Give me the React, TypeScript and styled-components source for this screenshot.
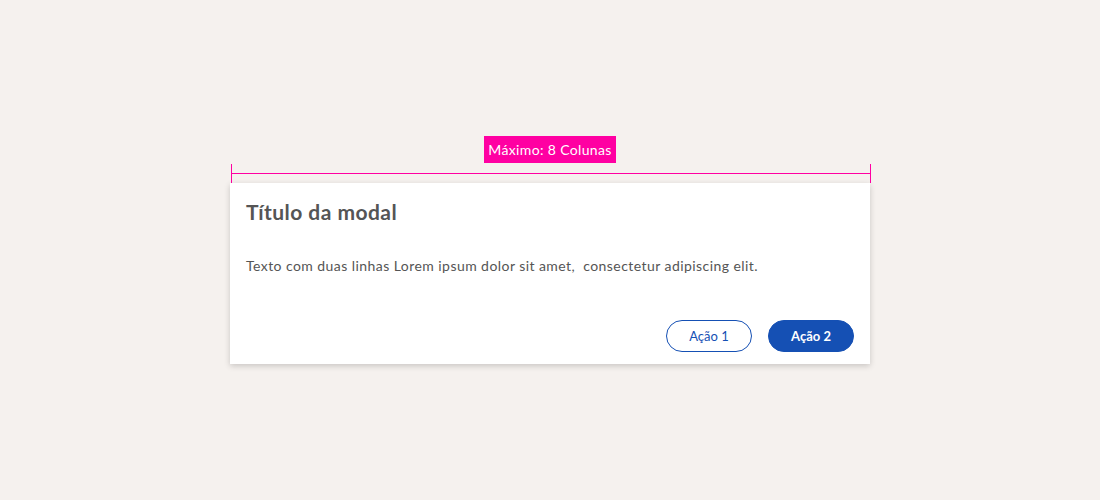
import React from "react";
import styled, { createGlobalStyle } from "styled-components";

const Global = createGlobalStyle`
  html, body { margin: 0; padding: 0; background: #f5f1ee; }
  body { font-family: "Lato", "Open Sans", sans-serif; }
`;

const Page = styled.div`
  width: 1100px;
  height: 500px;
  display: flex;
  flex-direction: column;
  align-items: center;
  padding-top: 136px;
  box-sizing: border-box;
`;

const Column = styled.div`
  width: 640px;
  display: flex;
  flex-direction: column;
  align-items: center;
`;

const Label = styled.div`
  background: #ff00a2;
  color: #fff;
  font-size: 14px;
  letter-spacing: 0.35px;
  height: 27px;
  line-height: 27px;
  padding: 0 4px;
`;

const Ruler = styled.div`
  align-self: flex-start;
  width: 640px;
  height: 19px;
  margin-top: 1px;
  margin-left: 1px;
  border-left: 1px solid #ff00a2;
  border-right: 1px solid #ff00a2;
  display: flex;
  flex-direction: column;
  padding-top: 9px;
  box-sizing: border-box;
`;

const RulerLine = styled.div`
  height: 1px;
  background: #ff00a2;
`;

const Modal = styled.div`
  width: 640px;
  background: #fff;
  box-shadow: 0 2px 6px rgba(0, 0, 0, 0.18);
  padding: 17px 16px 12px 16px;
  box-sizing: border-box;
  display: flex;
  flex-direction: column;
`;

const Title = styled.h2`
  margin: 0;
  font-size: 21px;
  font-weight: 700;
  letter-spacing: 0.45px;
  color: #555;
  line-height: 24px;
`;

const Body = styled.p`
  margin: 33px 0 0 0;
  font-size: 14px;
  letter-spacing: 0.44px;
  color: #555;
  line-height: 18px;
`;

const Actions = styled.div`
  display: flex;
  justify-content: flex-end;
  gap: 16px;
  margin-top: 45px;
`;

const Button = styled.button<{ $primary?: boolean }>`
  width: 86px;
  height: 32px;
  border-radius: 16px;
  border: 1px solid #1550b4;
  background: ${(p) => (p.$primary ? "#1550b4" : "#fff")};
  color: ${(p) => (p.$primary ? "#fff" : "#1550b4")};
  font-family: "Lato", sans-serif;
  font-size: 13px;
  font-weight: ${(p) => (p.$primary ? 700 : 400)};
  cursor: pointer;
`;

export default function App() {
  return (
    <>
      <Global />
      <Page>
        <Column>
          <Label>Máximo: 8 Colunas</Label>
          <Ruler>
            <RulerLine />
          </Ruler>
          <Modal>
            <Title>Título da modal</Title>
            <Body>Texto com duas linhas Lorem ipsum dolor sit amet,&nbsp; consectetur adipiscing elit.</Body>
            <Actions>
              <Button>Ação 1</Button>
              <Button $primary>Ação 2</Button>
            </Actions>
          </Modal>
        </Column>
      </Page>
    </>
  );
}
